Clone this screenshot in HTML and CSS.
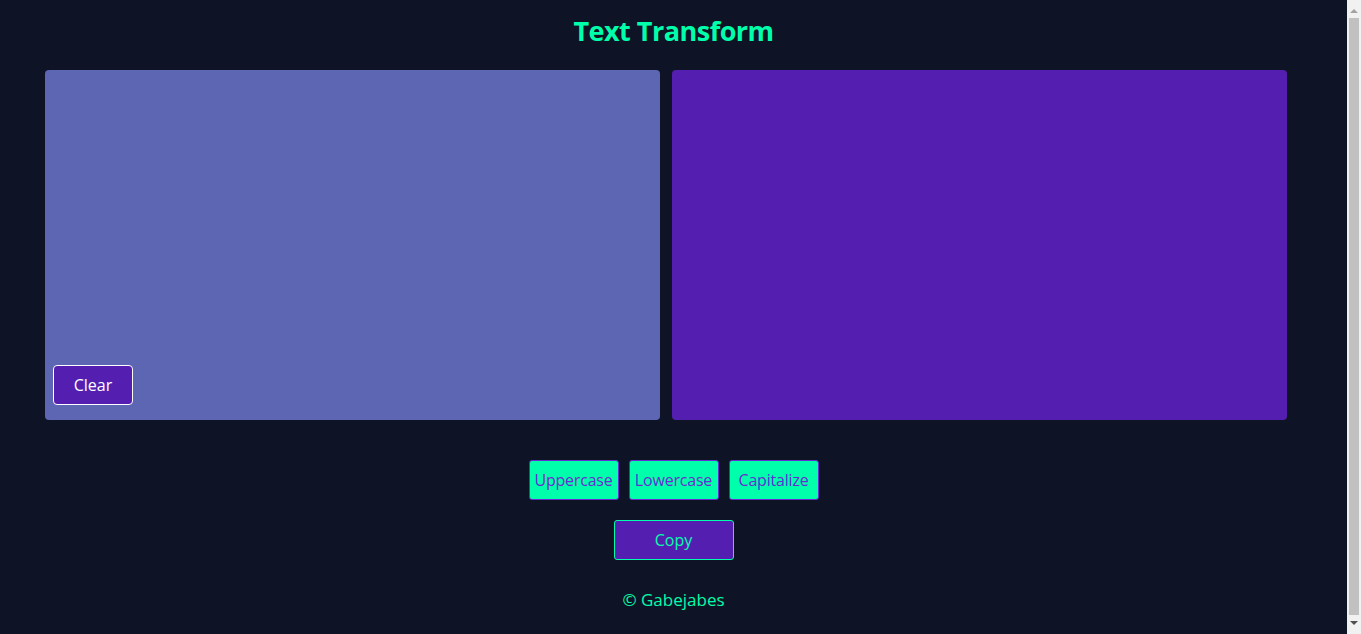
FILE: index.html
```html
<!DOCTYPE html>
<html lang="en">
<head>
    <meta charset="UTF-8">
    <meta name="viewport" content="width=device-width, initial-scale=1.0">
    <title>Text Transform</title>
    <link rel="stylesheet" href="styles.css">
</head>
<body>
    <h1 class="title">Text Transform</h1>

    <div class="boxes">
        <div class="box input-box">
            <textarea id="input"></textarea>
            <button class="clear-btn">Clear</button>
        </div>
        <div class="box output-box">
            <textarea id="output" readonly></textarea>
        </div>
    </div>

    <div class="actions">
        <button class="action-btn">Uppercase</button>
        <button class="action-btn">Lowercase</button>
        <button class="action-btn">Capitalize</button>
    </div>

    <div class="copy-row">
        <button class="copy-btn">Copy</button>
    </div>

    <footer class="footer">© Gabejabes</footer>

    <!-- window scrollbar -->
    <div class="scrollbar">
        <span class="arrow up"></span>
        <span class="thumb"></span>
        <span class="arrow down"></span>
    </div>
</body>
</html>
```

FILE: styles.css
```css
body {
    margin: 0;
    padding: 0 14px 10px 0;
    background-color: #0f1326;
    font-family: "Open Sans", "Liberation Sans", sans-serif;
    color: #00ffab;
}
.title {
    margin: 0;
    padding-top: 12px;
    height: 70px;
    box-sizing: border-box;
    text-align: center;
    font-size: 27px;
    font-weight: 700;
    letter-spacing: -0.5px;
    color: #00ffab;
}
.boxes {
    display: flex;
    gap: 12px;
    padding-left: 45px;
}
.box {
    position: relative;
    width: 615px;
    height: 350px;
    border-radius: 4px;
}
.input-box {
    background-color: #5c66b2;
}
.output-box {
    background-color: #541fb1;
}
.box textarea {
    width: 100%;
    height: 100%;
    box-sizing: border-box;
    background: transparent;
    border: none;
    resize: none;
    outline: none;
    padding: 10px;
    color: #fff;
    font-family: inherit;
}
.clear-btn {
    position: absolute;
    left: 8px;
    bottom: 15px;
    width: 80px;
    height: 40px;
    background-color: #541fb1;
    color: #fff;
    border: 1px solid #fff;
    border-radius: 4px;
    font-family: inherit;
    font-size: 16px;
    cursor: pointer;
}
.actions {
    display: flex;
    justify-content: center;
    gap: 10px;
    margin-top: 40px;
}
.action-btn {
    width: 90px;
    height: 40px;
    padding: 0;
    background-color: #00ffab;
    color: #6a2ad0;
    border: 1px solid #6a2ad0;
    border-radius: 3px;
    font-family: inherit;
    font-size: 16px;
    letter-spacing: -0.2px;
    cursor: pointer;
}
.copy-row {
    display: flex;
    justify-content: center;
    margin-top: 20px;
}
.copy-btn {
    width: 120px;
    height: 40px;
    background-color: #541fb1;
    color: #00ffab;
    border: 1px solid #00ffab;
    border-radius: 3px;
    font-family: inherit;
    font-size: 16px;
    cursor: pointer;
}
.footer {
    margin-top: 28px;
    text-align: center;
    font-size: 17px;
    color: #00ffab;
}
.scrollbar {
    position: fixed;
    top: 0;
    right: 0;
    width: 14px;
    height: 100%;
    display: flex;
    flex-direction: column;
    align-items: center;
    background-color: #f1f1f1;
}
.thumb {
    flex: 1;
    width: 10px;
    margin: 0 0 1px;
    background-color: #c1c1c1;
}
.arrow {
    width: 0;
    height: 4px;
    margin: 5px 0;
    border-left: 4px solid transparent;
    border-right: 4px solid transparent;
}
.arrow.up {
    border-bottom: 4px solid #a3a3a3;
}
.arrow.down {
    border-top: 4px solid #505050;
}
```
